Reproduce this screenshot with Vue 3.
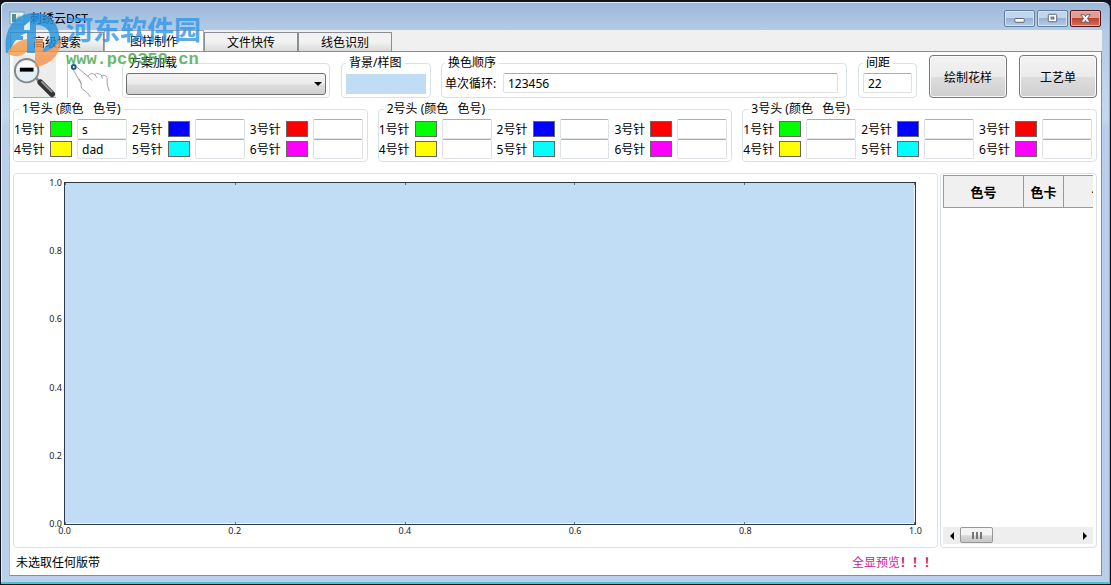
<template>
  <div class="window">
    <header class="titlebar">
      <svg class="app-icon" viewBox="0 0 16 16" aria-hidden="true">
        <rect x="1" y="2" width="14" height="12" fill="#e7f1ec" stroke="#7e9db4" />
        <rect x="3" y="4" width="4" height="8" fill="#4b9199" />
        <path d="M7 8l3-3 4 6v1H7z" fill="#abc9c7" />
      </svg>
      <h1 class="title">刺绣云DST</h1>
      <div class="win-buttons">
        <button class="win-btn" aria-label="最小化">
          <svg viewBox="0 0 30 16"><rect x="10" y="8" width="10" height="4" rx="1" fill="#fff" stroke="#535d6d" /></svg>
        </button>
        <button class="win-btn" aria-label="最大化">
          <svg viewBox="0 0 30 16">
            <rect x="10.500" y="3.500" width="9" height="8" rx="1" fill="#fff" stroke="#535d6d" />
            <rect x="13.500" y="6.500" width="3" height="2" fill="#9db8d5" stroke="#535d6d" />
          </svg>
        </button>
        <button class="win-btn win-close" aria-label="关闭">
          <svg viewBox="0 0 30 16">
            <path d="M10 4h4l1 2 1-2h4l-3 4 3 4h-4l-1-2-1 2h-4l3-4z" fill="#fff" stroke="#5c5564" />
          </svg>
        </button>
      </div>
    </header>

    <main class="client">
      <nav class="tabs" role="tablist">
        <button
          v-for="tab in tabs"
          :key="tab"
          class="tab"
          :class="{ active: tab === activeTab }"
          role="tab"
          :aria-selected="tab === activeTab"
          @click="activeTab = tab"
        >{{ tab }}</button>
      </nav>

      <section class="page">
        <div class="toolbar">
          <button class="tool tool-zoom" aria-label="缩小">
            <svg viewBox="0 0 44 44">
              <path d="M24 24l5 5" stroke="#888" stroke-width="3" />
              <path d="M28 28l12 12" stroke="#333" stroke-width="6" stroke-linecap="round" />
              <path d="M29 27l11 11" stroke="#999" stroke-width="2" />
              <circle cx="14" cy="16" r="12" fill="#e3eff4" stroke="#81878b" stroke-width="2" />
              <path d="M4 16a10 10 0 0 1 20 0c-6-3-14-3-20 0z" fill="#f8fcfd" />
              <rect x="7" y="13" width="14" height="4" fill="#000" />
            </svg>
          </button>
          <button class="tool tool-hand" aria-label="拖动">
            <svg viewBox="0 0 46 44">
              <g fill="none" stroke="#999" stroke-linecap="round">
                <path d="M5 14l9 16c-1 2 0 4 2 6 4 2 5 4 7 7" />
                <path d="M9 12l12 10c1-3 4-4 7-2 2-2 6-1 7 1 4-1 6 1 6 4-1 4 1 8 2 12" />
                <path d="M21 22l4 4M28 20l2 3M35 21l1 3" />
                <path d="M14 30l-2-5" />
              </g>
              <circle cx="6" cy="12" r="2" fill="#eef7fb" stroke="#185c87" stroke-width="2" />
            </svg>
          </button>
          <fieldset class="group scheme">
            <legend>方案加载</legend>
            <div class="combo">
              <select aria-label="方案加载"><option></option></select>
              <svg viewBox="0 0 8 4"><path d="M0 0h8L4 4z" /></svg>
            </div>
          </fieldset>
          <fieldset class="group backdrop">
            <legend>背景/样图</legend>
            <button class="backdrop-color" aria-label="背景颜色"></button>
          </fieldset>
          <fieldset class="group order">
            <legend>换色顺序</legend>
            <label for="order">单次循环:</label>
            <input id="order" v-model="order" class="field" type="text" />
          </fieldset>
          <fieldset class="group spacing">
            <legend>间距</legend>
            <input v-model="spacing" class="field" type="text" aria-label="间距" />
          </fieldset>
          <button class="action">绘制花样</button>
          <button class="action last">工艺单</button>
        </div>

        <div class="heads">
          <fieldset v-for="(head, h) in heads" :key="h" class="group head">
            <legend>{{ h + 1 }}号头 (颜色&nbsp;&nbsp; 色号)</legend>
            <div v-for="(needle, n) in head" :key="n" class="needle">
              <label :for="`needle-${h}-${n}`">{{ n + 1 }}号针</label>
              <button class="swatch" :class="needle.color" :aria-label="`${n + 1}号针颜色`"></button>
              <input :id="`needle-${h}-${n}`" v-model="needle.code" class="field" type="text" />
            </div>
          </fieldset>
        </div>

        <div class="work">
          <div class="panel chart">
            <div class="axis axis-y">
              <span v-for="t in [...ticks].reverse()" :key="t">{{ t }}</span>
            </div>
            <div class="plot">
              <div class="marks"><i v-for="t in ticks" :key="t"></i></div>
              <div class="marks"><i v-for="t in ticks" :key="t"></i></div>
            </div>
            <div class="axis axis-x">
              <span v-for="t in ticks" :key="t">{{ t }}</span>
            </div>
          </div>

          <div class="panel colors">
            <div class="table-wrap">
              <table>
                <thead>
                  <tr><th class="col-code">色号</th><th class="col-card">色卡</th><th class="col-more">长度</th></tr>
                </thead>
              </table>
            </div>
            <div class="scrollbar">
              <button aria-label="向左"><svg viewBox="0 0 4 8"><path d="M4 0v8L0 4z" /></svg></button>
              <div class="track"><div class="thumb"><i></i><i></i><i></i></div></div>
              <button aria-label="向右"><svg viewBox="0 0 4 8"><path d="M0 0v8l4-4z" /></svg></button>
            </div>
          </div>
        </div>

        <footer class="status">
          <span>未选取任何版带</span>
          <span class="preview">全显预览<b>！！！</b></span>
        </footer>
      </section>
    </main>

    <div class="watermark">
      <svg viewBox="0 0 58 56" aria-hidden="true">
        <path d="M1 41C-2 18 9 2 28 1 45 0 56 13 54 29c-2 11-11 16-22 17l1-8c8-1 12-6 12-13 0-8-6-12-14-12v28h-9V21c-9 2-14 9-17 20z" fill="#2492dc" />
        <path d="M4 24h14v4H3z" fill="#2492dc" />
        <path d="M2 41c7 5 16 4 20-2V27c-8 1-15 6-20 14z" fill="#f59a45" />
        <path d="M30 27h8v13c10-2 16-8 18-17 2 17-9 30-26 32z" fill="#f6924c" />
        <path d="M19 14l6-5v9h-6z" fill="#e6f4fc" />
      </svg>
      <div class="watermark-text">
        <div class="watermark-name">河东软件园</div>
        <div class="watermark-site">www.pc0359.cn</div>
      </div>
    </div>
  </div>
</template>

<script setup>
import { ref } from 'vue'

const tabs = ['高级搜索', '图样制作', '文件快传', '线色识别']
const activeTab = ref('图样制作')

const order = ref('123456')
const spacing = ref('22')

const colors = ['green', 'blue', 'red', 'yellow', 'cyan', 'magenta']
const makeHead = (codes = {}) => colors.map((color, i) => ({ color, code: codes[i + 1] || '' }))
const heads = ref([makeHead({ 1: 's', 4: 'dad' }), makeHead(), makeHead()])

const ticks = ['0.0', '0.2', '0.4', '0.6', '0.8', '1.0']
</script>

<style>
body { margin: 0; background: #10131c; }
</style>

<style scoped>
* { box-sizing: border-box; }
button, input, select { font: inherit; color: inherit; margin: 0; padding: 0; }
.window {
  position: relative; display: flex; flex-direction: column; min-height: 100vh; padding: 0 8px 8px;
  font: 12px/16px "Noto Sans", "Noto Sans CJK SC", sans-serif; color: #000;
  border: 1px solid #10131c; border-top-width: 2px; border-radius: 6px 8px 0 0;
  background: linear-gradient(#9bb7d9 0, #b3cbe6 28px, #c3d9ee 115px, #b9cfea 125px);
  box-shadow: inset -1px -2px #48c5dc, inset 1px 1px #e1edf8;
}

.titlebar { display: flex; height: 28px; }
.app-icon { width: 16px; height: 16px; margin: 8px 5px 0 0; }
.title { flex: 1; margin: 9px 0 0; font-size: 12px; line-height: 16px; font-weight: 400; }
.win-buttons { display: flex; gap: 2px; margin: 8px 1px 0 0; }
.win-btn { width: 31px; height: 17px; border: 1px solid #627f9f; border-radius: 2px; background: linear-gradient(#c2d5ea 45%, #96b3d3 50%, #b5cee7); box-shadow: inset 0 0 0 1px #d5e3f2; }
.win-btn svg { display: block; width: 100%; height: 15px; }
.win-close { border-color: #55151c; background: linear-gradient(#dfa093 45%, #c2412d 50%, #d8705c); box-shadow: inset 0 0 0 1px #e8b4a8; }

.client { flex: 1; display: flex; flex-direction: column; background: #f0f0f0; }
.tabs { display: flex; align-items: flex-end; height: 21px; padding-left: 1px; }
.tab { width: 94px; height: 19px; padding-top: 2px; border: 1px solid #8b8e94; border-bottom: 0; background: linear-gradient(#f2f2f2 50%, #dadada); }
.tab.active { width: 100px; height: 22px; margin-bottom: -1px; padding: 0; border-color: #a5a8ad; background: #fff; }
.page { flex: 1; display: flex; flex-direction: column; border: 1px solid #898c95; border-left-color: #b5bac2; padding: 3px 4px 4px 3px; background: #fff; }

.toolbar { display: flex; height: 43px; margin-bottom: 3px; }
.tool { flex: none; height: 43px; border: 0; background: #fff; }
.tool svg { display: block; width: 44px; height: 43px; fill: none; }
.tool-zoom { width: 43px; margin-right: 11px; background: #ececec; border-bottom: 1px solid #aaa; }
.tool-zoom svg { width: 43px; }
.tool-hand { width: 46px; margin-right: 9px; border-left: 1px solid #c9c9c9; }

.group { min-width: 0; margin: 0; padding: 2px 4px; border: 1px solid #d9e2e6; border-radius: 4px; }
.group legend { padding: 0 3px; white-space: nowrap; }
.field { min-width: 0; height: 20px; padding: 0 4px; border: 1px solid #dde1e6; border-top-color: #abadb3; border-radius: 2px; background: #fff; outline: none; }
.scheme { flex: 1 1 208px; margin-right: 11px; padding: 2px 3px; }
.combo { display: flex; align-items: center; position: relative; }
.combo select { width: 100%; height: 22px; appearance: none; border: 1px solid #707070; border-radius: 3px; background: linear-gradient(#f3f3f3, #ebebeb 50%, #dcdcdc 55%, #d0d0d0); }
.combo svg { position: absolute; right: 4px; width: 8px; height: 4px; pointer-events: none; }
.backdrop { flex: none; width: 90px; margin-right: 10px; padding: 3px 4px; }
.backdrop-color { display: block; width: 100%; height: 20px; border: 0; background: #c0ddf5; }
.order { flex: 2 1 406px; margin-right: 11px; padding: 2px 8px 2px 3px; }
.order label { display: inline-block; width: 58px; }
.order .field { width: calc(100% - 58px); }
.spacing { flex: none; width: 59px; margin-right: 12px; }
.spacing .field { width: 100%; }
.action { flex: none; width: 78px; margin-right: 12px; padding-top: 2px; border: 1px solid #777; border-radius: 4px; background: linear-gradient(#f3f3f3, #ebebeb 50%, #dddddd 52%, #cfcfcf); box-shadow: inset 0 0 0 1px #fafafa; }
.action.last { margin-right: 0; }

.heads { display: grid; grid-template-columns: repeat(3, minmax(0, 1fr)); gap: 10px; margin-bottom: 11px; }
.head { display: grid; grid-template-columns: repeat(3, minmax(0, 1fr)); column-gap: 5px; padding: 2px 4px 2px 0; }
.head legend { margin-left: 5px; }
.needle { display: flex; align-items: center; height: 20px; }
.needle label { width: 36px; padding-top: 1px; white-space: nowrap; }
.needle .field { flex: 1; }
.swatch { width: 22px; height: 16px; margin-right: 5px; border: 1px solid #666; flex: none; }
.green { background: #0f0; }
.blue { background: #00f; }
.red { background: #f00; }
.yellow { background: #ff0; }
.cyan { background: #0ff; }
.magenta { background: #f0f; }

.work { flex: 1; display: flex; gap: 2px; }
.panel { border: 1px solid #d9e2e6; border-radius: 4px; }
.chart { flex: 1; display: grid; grid-template: 1fr 22px / 50px 1fr; padding: 8px 21px 0 0; }
.axis { display: flex; justify-content: space-between; font-size: 9px; line-height: 10px; color: #222; }
.axis-y { flex-direction: column; align-items: flex-end; padding-right: 2px; }
.axis-y span { display: flex; align-items: center; height: 1px; }
.axis-x { grid-column: 2; padding-top: 1px; }
.axis-x span { display: flex; justify-content: center; width: 1px; height: 10px; }
.plot { display: flex; flex-direction: column; justify-content: space-between; border: 1px solid #2c3a48; background: #c0ddf5; box-shadow: inset -1px -1px #f4faff; }
.marks { display: flex; justify-content: space-between; }
.marks i { width: 1px; height: 2px; background: #637585; }

.colors { flex: none; width: 157px; display: flex; flex-direction: column; justify-content: space-between; padding: 1px 3px 3px 2px; }
.table-wrap { overflow: hidden; }
table { width: 202px; table-layout: fixed; border-collapse: collapse; }
th { height: 32px; padding: 0; border: 1px solid #999; background: #f0f0f0; font-size: 13px; font-weight: 700; }
.col-code { width: 80px; }
.col-card { width: 40px; }
.col-more { width: 82px; }
.scrollbar { display: flex; height: 17px; background: #eee; }
.scrollbar button { display: flex; align-items: center; justify-content: center; width: 17px; border: 0; background: transparent; }
.scrollbar svg { width: 4px; height: 8px; }
.track { flex: 1; }
.thumb { display: flex; align-items: center; justify-content: center; gap: 2px; width: 33px; height: 16px; border: 1px solid #979797; border-radius: 2px; background: linear-gradient(#f4f4f4 50%, #d6d6d6 55%, #c8c8c8); }
.thumb i { width: 2px; height: 7px; background: #777; }

.status { display: flex; justify-content: space-between; padding: 7px 161px 0 3px; }
.preview { color: #cb1a9c; }
.preview b { color: #d40f6a; }

.watermark { position: absolute; top: 10px; left: 4px; display: flex; gap: 3px; pointer-events: none; opacity: 0.8; }
.watermark svg { width: 58px; height: 56px; }
.watermark-name { margin-bottom: 4px; font: 700 27px/34px "Noto Sans CJK SC", sans-serif; color: #3097e8; }
.watermark-site { font: 700 17px/20px "Liberation Mono", monospace; color: #43a847; }
</style>
